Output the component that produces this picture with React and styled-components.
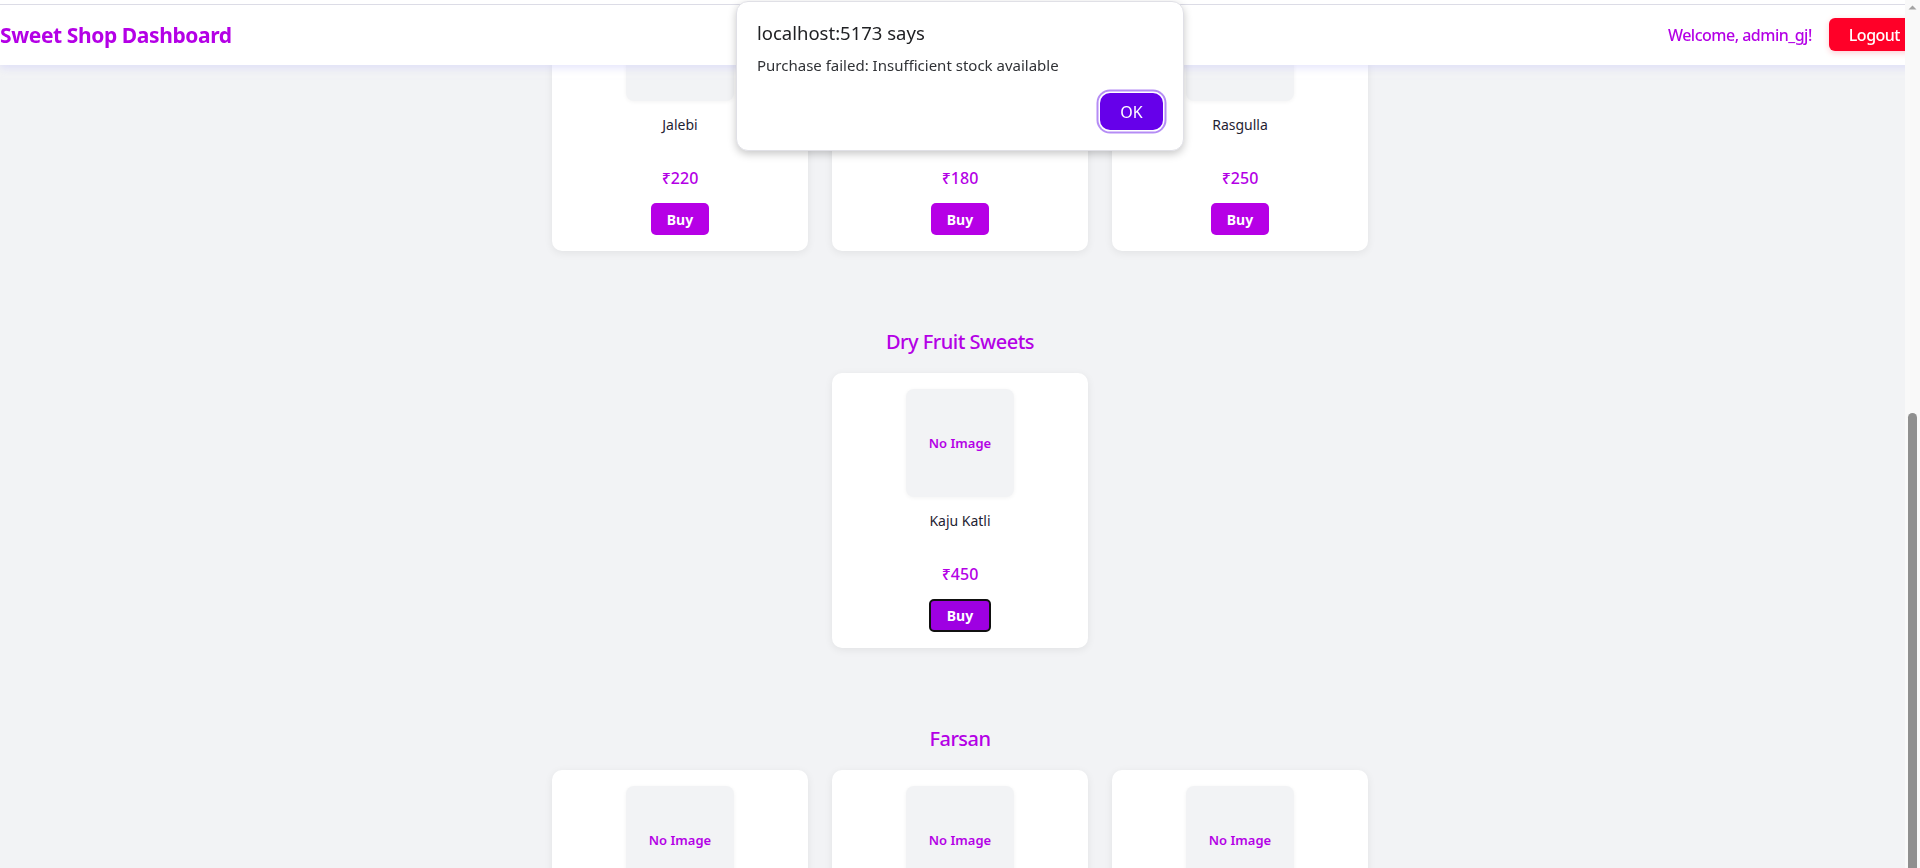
import React, { useLayoutEffect, useRef } from 'react';
import styled, { createGlobalStyle } from 'styled-components';

const GlobalStyle = createGlobalStyle`
  html, body {
    margin: 0;
    height: 100%;
    overflow: hidden;
  }

  body {
    background: #f2f3f5;
    font-family: "Noto Sans", "Open Sans", sans-serif;
  }
`;

const Scroller = styled.div`
  height: 100vh;
  overflow-y: scroll;
  overflow-x: hidden;
  background: #f2f3f5;
  scrollbar-width: none;

  &::-webkit-scrollbar {
    display: none;
  }
`;

// the browser's own scrollbar, drawn over the right edge
const ScrollTrack = styled.div`
  position: fixed;
  top: 0;
  right: 0;
  z-index: 20;
  width: 15px;
  height: 100vh;
  background: #f9f9f9;
  display: flex;
  flex-direction: column;
  align-items: center;
`;

const ScrollArrow = styled.svg`
  display: block;
  margin-top: 3px;
`;

const ScrollThumb = styled.div`
  margin-top: auto;
  width: 9px;
  height: 455px;
  border-radius: 5px 5px 0 0;
  background: #8f8f8f;
`;

const Page = styled.div`
  width: 100vw;
  padding-bottom: 60px;
`;

const Header = styled.header`
  position: sticky;
  top: 0;
  z-index: 10;
  width: calc(100vw + 5px);
  height: 61px;
  border-top: 4px solid #fff;
  background: #fff;
  display: flex;
  align-items: center;
  justify-content: space-between;
  box-shadow: inset 0 1px 0 #dcdce6, 0 3px 8px rgba(205, 205, 250, 0.55);
`;

const Brand = styled.h1`
  margin: 0;
  font-size: 21px;
  font-weight: 700;
  letter-spacing: -0.4px;
  color: #b400e6;
`;

const UserArea = styled.div`
  display: flex;
  align-items: center;
  gap: 17px;
`;

const Welcome = styled.span`
  font-size: 16px;
  font-weight: 500;
  letter-spacing: -0.5px;
  color: #b400e6;
`;

const LogoutButton = styled.button`
  height: 33px;
  padding: 0 25px 0 20px;
  border: none;
  border-radius: 6px;
  background: #ff0028;
  color: #fff;
  font-family: inherit;
  font-size: 16px;
  font-weight: 500;
  letter-spacing: -0.5px;
  box-shadow: 0 2px 6px rgba(255, 0, 40, 0.2);
  cursor: pointer;
`;

const Main = styled.main`
  display: flex;
  flex-direction: column;
  gap: 77px;
  padding-top: 40px;
`;

const Section = styled.section`
  display: flex;
  flex-direction: column;
  align-items: center;
`;

const SectionTitle = styled.h2`
  margin: 0 0 17px;
  font-size: 20px;
  line-height: 28px;
  font-weight: 500;
  letter-spacing: -0.5px;
  color: #b400e6;
`;

const CardRow = styled.div`
  display: flex;
  flex-wrap: wrap;
  justify-content: center;
  gap: 24px;
  width: 816px;
`;

const Card = styled.div`
  width: 256px;
  box-sizing: border-box;
  padding: 16px;
  background: #fff;
  border-radius: 10px;
  box-shadow: 0 2px 8px rgba(0, 0, 0, 0.07);
  display: flex;
  flex-direction: column;
  align-items: center;
`;

const ImageBox = styled.div`
  width: 108px;
  height: 108px;
  border-radius: 8px;
  background: #f2f3f5;
  box-shadow: 0 1px 4px rgba(0, 0, 0, 0.05);
  display: flex;
  align-items: center;
  justify-content: center;
  font-size: 13px;
  font-weight: 600;
  color: #b400e6;
`;

const SweetName = styled.div`
  margin-top: 14px;
  font-size: 14px;
  line-height: 20px;
  color: #1f2333;
`;

const Price = styled.div`
  margin-top: 32px;
  font-size: 16px;
  line-height: 22px;
  font-weight: 500;
  color: #b400e6;
`;

const BuyButton = styled.button`
  margin-top: 14px;
  height: ${({ $focused }) => ($focused ? '33px' : '32px')};
  padding: 0 16px;
  box-sizing: border-box;
  border: ${({ $focused }) => ($focused ? '2px solid #111' : 'none')};
  border-radius: 5px;
  background: ${({ $focused }) => ($focused ? '#9e00e2' : '#b600e6')};
  color: #fff;
  font-family: inherit;
  font-size: 14px;
  font-weight: 700;
  cursor: pointer;
`;

const AlertLayer = styled.div`
  position: fixed;
  top: 1px;
  left: 0;
  width: 1920px;
  z-index: 50;
  display: flex;
  justify-content: center;
  pointer-events: none;
`;

const AlertBox = styled.div`
  width: 448px;
  height: 150px;
  box-sizing: border-box;
  padding: 18px 20px 20px;
  background: #fff;
  border: 1px solid #e0e0e6;
  border-radius: 12px;
  box-shadow: 0 3px 8px rgba(0, 0, 0, 0.22);
  display: flex;
  flex-direction: column;
  pointer-events: auto;
`;

const AlertTitle = styled.div`
  font-size: 18.5px;
  line-height: 26px;
  color: #202124;
`;

const AlertText = styled.div`
  margin-top: 9px;
  font-size: 15px;
  line-height: 20px;
  color: #303236;
`;

const AlertActions = styled.div`
  margin-top: auto;
  display: flex;
  justify-content: flex-end;
`;

const OkButton = styled.button`
  width: 63px;
  height: 37px;
  border: none;
  border-radius: 10px;
  background: #6600ea;
  color: #fff;
  font-family: inherit;
  font-size: 16px;
  box-shadow: 0 0 0 1.5px #fff, 0 0 0 3.5px #b58cf5;
`;

const sections = [
  {
    title: 'Milk Sweets',
    items: [
      { name: 'Peda', price: 300 },
      { name: 'Kalakand', price: 380 },
      { name: 'Milk Barfi', price: 350 },
    ],
  },
  {
    title: 'Syrup Sweets',
    items: [
      { name: 'Jalebi', price: 220 },
      { name: 'Gulab Jamun', price: 180 },
      { name: 'Rasgulla', price: 250 },
    ],
  },
  {
    title: 'Dry Fruit Sweets',
    anchor: true,
    items: [{ name: 'Kaju Katli', price: 450, focused: true }],
  },
  {
    title: 'Farsan',
    items: [
      { name: 'Khaman Dhokla', price: 160 },
      { name: 'Khandvi', price: 200 },
      { name: 'Fafda', price: 240 },
    ],
  },
];

const App = () => {
  const scrollerRef = useRef(null);
  const anchorRef = useRef(null);

  useLayoutEffect(() => {
    const scroller = scrollerRef.current;
    const anchor = anchorRef.current;
    if (!scroller || !anchor) return;
    const top = anchor.getBoundingClientRect().top;
    scroller.scrollTop += top - 373;
  }, []);

  return (
    <>
      <GlobalStyle />
      <Scroller ref={scrollerRef}>
        <Page>
          <Header>
            <Brand>Sweet Shop Dashboard</Brand>
            <UserArea>
              <Welcome>Welcome, admin_gj!</Welcome>
              <LogoutButton>Logout</LogoutButton>
            </UserArea>
          </Header>

          <Main>
            {sections.map(section => (
              <Section key={section.title}>
                <SectionTitle>{section.title}</SectionTitle>
                <CardRow>
                  {section.items.map(item => (
                    <Card key={item.name} ref={section.anchor ? anchorRef : null}>
                      <ImageBox>No Image</ImageBox>
                      <SweetName>{item.name}</SweetName>
                      <Price>₹{item.price}</Price>
                      <BuyButton $focused={item.focused}>Buy</BuyButton>
                    </Card>
                  ))}
                </CardRow>
              </Section>
            ))}
          </Main>
        </Page>
      </Scroller>

      <ScrollTrack>
        <ScrollArrow width="9" height="9" viewBox="0 0 9 9">
          <polygon points="0.5,6.5 8.5,6.5 4.5,2.5" fill="#a3a3a3" />
        </ScrollArrow>
        <ScrollThumb />
      </ScrollTrack>

      <AlertLayer>
        <AlertBox>
          <AlertTitle>localhost:5173 says</AlertTitle>
          <AlertText>Purchase failed: Insufficient stock available</AlertText>
          <AlertActions>
            <OkButton>OK</OkButton>
          </AlertActions>
        </AlertBox>
      </AlertLayer>
    </>
  );
};

export default App;
